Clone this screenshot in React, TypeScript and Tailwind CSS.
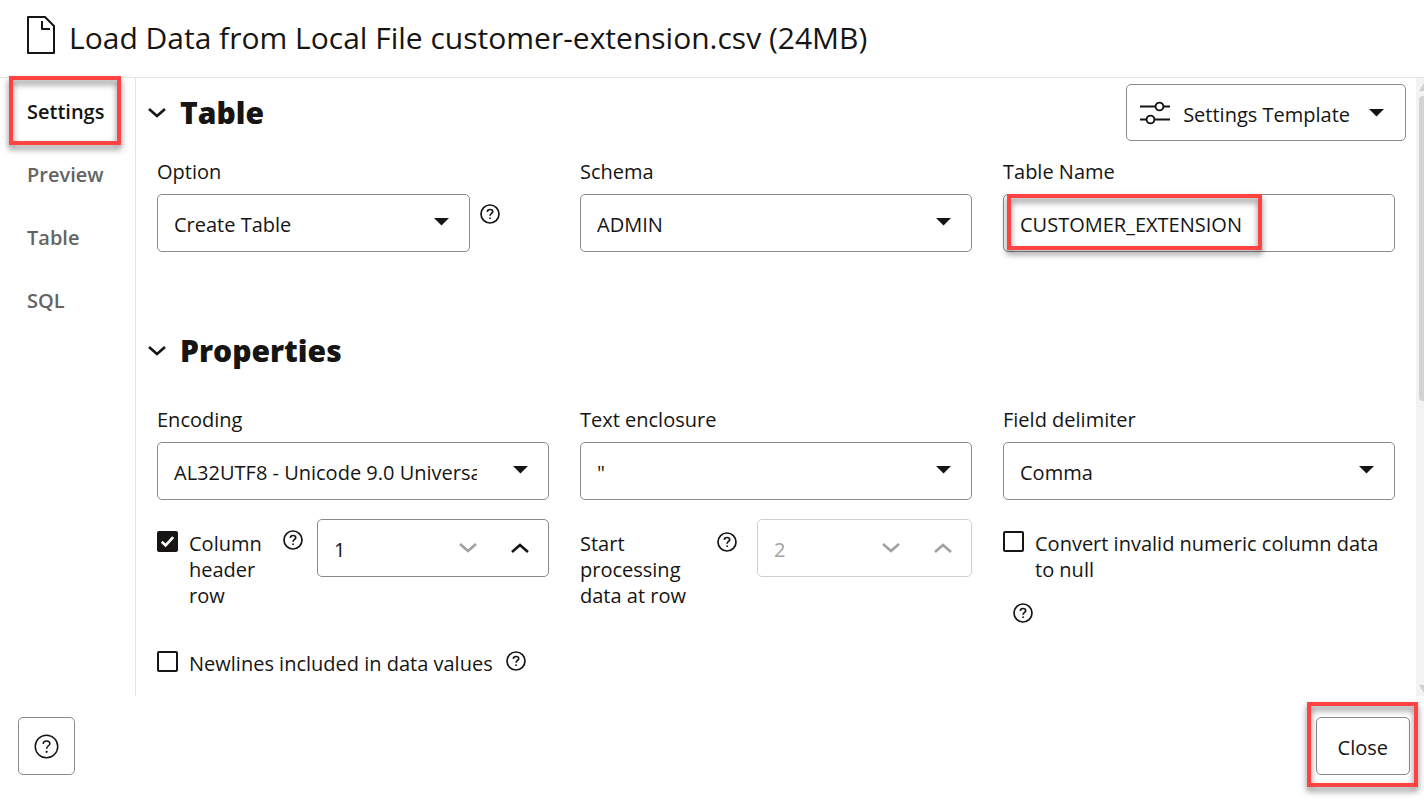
import { useState } from "react";
import type { ReactNode } from "react";

const FIELD =
  "h-[58px] w-full appearance-none rounded-[5px] border border-[#8b8a88] bg-white pl-4 pt-[3px] text-[20px] text-[#161513] outline-none";

function HelpIcon({ className = "size-5", stroke = 1.7 }: { className?: string; stroke?: number }) {
  return (
    <svg viewBox="0 0 20 20" fill="none" stroke="#161513" strokeWidth={stroke} className={className} aria-hidden="true">
      <circle cx="10" cy="10" r="9" />
      <path d="M7.3 7.9C7.4 6.3 8.4 5.5 10 5.5C11.6 5.5 12.7 6.4 12.7 7.7C12.7 9.4 10.1 9.5 10.1 11.7" />
      <circle cx="10.1" cy="14.2" r="0.9" fill="#161513" stroke="none" />
    </svg>
  );
}

function HelpButton({ label, className = "" }: { label: string; className?: string }) {
  return (
    <button type="button" aria-label={label} className={`size-5 shrink-0 ${className}`}>
      <HelpIcon />
    </button>
  );
}

function Caret({ className = "" }: { className?: string }) {
  return (
    <svg viewBox="0 0 15 8" className={`h-2 w-[15px] shrink-0 ${className}`} fill="#161513" aria-hidden="true">
      <path d="M0 0H15L7.5 7.5Z" />
    </svg>
  );
}

function Chevron({ up = false, color = "#161513", className = "" }: { up?: boolean; color?: string; className?: string }) {
  return (
    <svg viewBox="0 0 18 10" fill="none" stroke={color} strokeWidth="2.6" className={`h-[10px] w-[18px] ${className}`} aria-hidden="true">
      <path d={up ? "M1 9L9 2L17 9" : "M1 1L9 8L17 1"} />
    </svg>
  );
}

function Highlight({ className }: { className: string }) {
  return (
    <span
      aria-hidden="true"
      className={`pointer-events-none absolute z-10 border-4 border-[#ff4343] drop-shadow-[0_4px_3px_rgba(0,0,0,0.5)] ${className}`}
    />
  );
}

function Field({ id, label, children }: { id: string; label: string; children: ReactNode }) {
  return (
    <div className="min-w-0">
      <label htmlFor={id} className="mb-[9px] block">
        {label}
      </label>
      {children}
    </div>
  );
}

function SelectBox({ id, value }: { id: string; value: string }) {
  return (
    <div className="relative min-w-0 flex-1">
      <select id={id} defaultValue={value} className={`${FIELD} pr-[71px]`}>
        <option value={value}>{value}</option>
      </select>
      <Caret className="pointer-events-none absolute right-[21px] top-6" />
    </div>
  );
}

function CheckBox({ label, checked = false, className = "" }: { label: string; checked?: boolean; className?: string }) {
  const [on, setOn] = useState(checked);
  return (
    <label className={`flex gap-[11px] ${className}`}>
      <span className="relative size-[21px] shrink-0">
        <input
          type="checkbox"
          checked={on}
          onChange={(e) => setOn(e.target.checked)}
          className="block size-[21px] appearance-none rounded-[2px] border-2 border-[#161513] bg-white checked:bg-[#161513]"
        />
        {on && (
          <svg viewBox="0 0 21 21" fill="none" stroke="#fff" strokeWidth="2.6" className="pointer-events-none absolute inset-0" aria-hidden="true">
            <path d="M4.8 10.8L8.6 14.5L16.2 6.2" />
          </svg>
        )}
      </span>
      <span>{label}</span>
    </label>
  );
}

function NumberField({
  id,
  label,
  value,
  disabled = false,
  className,
}: {
  id: string;
  label: string;
  value: number;
  disabled?: boolean;
  className: string;
}) {
  const [n, setN] = useState(value);
  const atMin = disabled || n <= 1;
  return (
    <div
      className={`flex h-[58px] shrink-0 items-center rounded-[5px] border pr-[2px] ${
        disabled ? "border-[#d0d0cf] text-[#a2a1a0]" : "border-[#8b8a88]"
      } ${className}`}
    >
      <input
        id={id}
        aria-label={label}
        type="text"
        inputMode="numeric"
        value={n}
        disabled={disabled}
        onChange={(e) => setN(Number(e.target.value) || 1)}
        className="h-full min-w-0 flex-1 bg-transparent pl-4 pt-[3px] outline-none"
      />
      <button type="button" aria-label="Decrease" disabled={atMin} onClick={() => setN(n - 1)} className="flex h-full w-13 items-center justify-center">
        <Chevron color={atMin ? "#a2a1a0" : "#161513"} />
      </button>
      <button type="button" aria-label="Increase" disabled={disabled} onClick={() => setN(n + 1)} className="flex h-full w-13 items-center justify-center">
        <Chevron up color={disabled ? "#a2a1a0" : "#161513"} />
      </button>
    </div>
  );
}

function SectionTitle({ children }: { children: ReactNode }) {
  return (
    <h2 className="-ml-[9px]">
      <button type="button" aria-expanded="true" className="flex items-center gap-[14px] text-[30px] leading-10 font-extrabold">
        <Chevron />
        {children}
      </button>
    </h2>
  );
}

const TABS = ["Settings", "Preview", "Table", "SQL"];

export default function App() {
  const [tab, setTab] = useState("Settings");
  return (
    <div className="flex h-screen flex-col bg-white font-['Open_Sans','Noto_Sans',sans-serif] text-[20px] leading-[26px] text-[#161513]">
      <header className="flex h-[78px] shrink-0 items-center gap-[14px] border-b border-[#e4e4e3] pl-[27px]">
        <svg viewBox="0 0 28 38" fill="none" stroke="#161513" strokeWidth="2" strokeLinejoin="round" className="mb-2 h-[38px] w-7" aria-hidden="true">
          <path d="M1 1H18L27 10V37H1Z" />
          <path d="M15 5V13H23" />
        </svg>
        <h1 className="mb-0.5 text-[30px] leading-10">Load Data from Local File customer-extension.csv (24MB)</h1>
      </header>

      <div className="flex min-h-0 flex-1">
        <nav className="w-[136px] shrink-0 border-r border-[#e4e4e3] pt-[2px]" aria-label="Sections">
          {TABS.map((t) => (
            <div key={t} className="relative">
              <button
                type="button"
                onClick={() => setTab(t)}
                aria-current={tab === t ? "page" : undefined}
                className={`block h-[63px] w-full pl-[27px] text-left font-semibold ${tab === t ? "text-[#161513]" : "text-[#656462]"}`}
              >
                {t}
              </button>
              {t === "Settings" && <Highlight className="-top-1 left-[9px] h-[69px] w-28" />}
            </div>
          ))}
        </nav>

        <main className="min-w-0 flex-1 overflow-hidden px-[21px]">
          <div className="-mr-[11px] flex items-center justify-between pt-[6px]">
            <SectionTitle>Table</SectionTitle>
            <button type="button" className="flex h-[57px] items-center rounded-[5px] border border-[#8b8a88] pr-[21px] pl-[13px]">
              <svg viewBox="0 0 30 24" fill="none" stroke="#161513" strokeWidth="1.9" className="h-6 w-[30px]" aria-hidden="true">
                <path d="M0 5.5H15M24 5.5H30M0 18.5H6M15 18.5H30" />
                <circle cx="19.5" cy="5.5" r="3.9" />
                <circle cx="10.5" cy="18.5" r="3.9" />
              </svg>
              <span className="mt-1 ml-[13px]">Settings Template</span>
              <Caret className="ml-[19px]" />
            </button>
          </div>

          <div className="mt-[18px] grid grid-cols-3 gap-x-[31px]">
            <Field id="option" label="Option">
              <div className="flex gap-[10px]">
                <SelectBox id="option" value="Create Table" />
                <HelpButton label="Help for Option" className="mt-[10px] mr-[49px]" />
              </div>
            </Field>
            <Field id="schema" label="Schema">
              <SelectBox id="schema" value="ADMIN" />
            </Field>
            <Field id="table-name" label="Table Name">
              <div className="relative">
                <input id="table-name" type="text" defaultValue="CUSTOMER_EXTENSION" className={FIELD} />
                <Highlight className="top-0 left-1 h-14 w-[255px]" />
              </div>
            </Field>
          </div>

          <div className="mt-[79px]">
            <SectionTitle>Properties</SectionTitle>
          </div>

          <div className="mt-9 grid grid-cols-3 gap-x-[31px]">
            <Field id="encoding" label="Encoding">
              <SelectBox id="encoding" value="AL32UTF8 - Unicode 9.0 Universal character set" />
            </Field>
            <Field id="enclosure" label="Text enclosure">
              <SelectBox id="enclosure" value={'"'} />
            </Field>
            <Field id="delimiter" label="Field delimiter">
              <SelectBox id="delimiter" value="Comma" />
            </Field>
          </div>

          <div className="mt-[19px] grid grid-cols-3 gap-x-[31px]">
            <div className="flex">
              <CheckBox label="Column header row" checked className="w-[115px] pt-3" />
              <HelpButton label="Help for Column header row" className="mt-[11px] mr-[14px] ml-[11px]" />
              <NumberField id="header-row" label="Column header row number" value={1} className="min-w-0 flex-1" />
            </div>
            <div className="flex justify-between">
              <label htmlFor="start-row" className="w-[115px] pt-3">
                Start processing data at row
              </label>
              <div className="flex gap-5">
                <HelpButton label="Help for Start processing data at row" className="mt-[13px]" />
                <NumberField id="start-row" label="Start processing data at row" value={2} disabled className="w-[215px]" />
              </div>
            </div>
            <div className="pt-3">
              <CheckBox label="Convert invalid numeric column data to null" />
              <HelpButton label="Help for Convert invalid numeric column data to null" className="mt-5 ml-[10px] block" />
            </div>
          </div>

          <div className="mt-7 flex gap-[13px]">
            <CheckBox label="Newlines included in data values" />
            <HelpButton label="Help for Newlines included in data values" />
          </div>
        </main>

        <div className="flex w-2 shrink-0 flex-col overflow-hidden bg-[#f3f3f3] pt-[5px] pl-[3px]" aria-hidden="true">
          <svg viewBox="0 0 10 8" className="h-2 w-[10px] shrink-0" fill="#cfcfcf">
            <path d="M0 8L5 0L10 8Z" />
          </svg>
          <span className="mt-[5px] h-[305px] w-[10px] rounded-[4px] bg-[#d3d3d2]" />
          <svg viewBox="0 0 10 8" className="mt-auto mb-[3px] h-2 w-[10px] shrink-0" fill="#cfcfcf">
            <path d="M0 0L5 8L10 0Z" />
          </svg>
        </div>
      </div>

      <footer className="flex shrink-0 items-center justify-between pt-[21px] pr-[14px] pb-[37px] pl-[18px]">
        <button type="button" aria-label="Help" className="flex h-[58px] w-[57px] items-center justify-center rounded-[5px] border border-[#8b8a88]">
          <HelpIcon className="size-[25px]" stroke={1.2} />
        </button>
        <div className="relative">
          <button type="button" className="h-[58px] rounded-[5px] border border-[#8b8a88] px-[21px] pt-[3px]">
            Close
          </button>
          <Highlight className="-top-[15px] -right-2 -bottom-3 -left-[9px]" />
        </div>
      </footer>
    </div>
  );
}
